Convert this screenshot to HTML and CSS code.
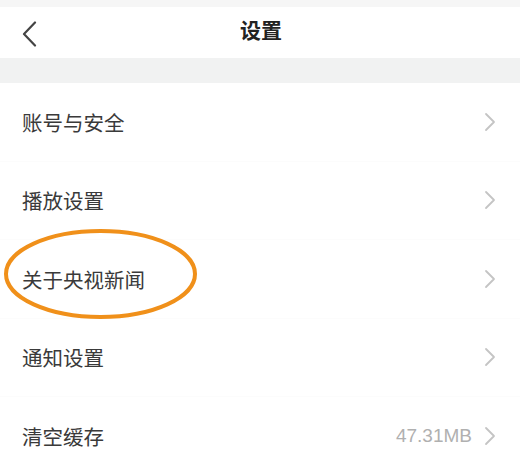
FILE: index.html
```html
<!DOCTYPE html>
<html lang="zh-CN">
<head>
    <meta charset="UTF-8">
    <meta name="viewport" content="width=device-width, initial-scale=1.0">
    <title>设置</title>
    <link rel="stylesheet" href="styles.css">
</head>
<body>
<div class="page">
    <div class="top-strip"></div>
    <div class="nav-bar">
        <span class="nav-back">
            <svg width="16" height="26" viewBox="0 0 16 26"><path d="M14 1.5 L3 13 L14 24.5" fill="none" stroke="#444" stroke-width="2.2" stroke-linecap="round" stroke-linejoin="round"/></svg>
        </span>
        <span class="nav-title">设置</span>
    </div>
    <div class="gap-band"></div>
    <ul class="settings-list">
        <li class="settings-item">
            <span class="item-label">账号与安全</span>
            <span class="item-right"><svg class="chev" width="12" height="20" viewBox="0 0 12 20"><path d="M2 2 L10 10 L2 18" fill="none" stroke="#c4c4c4" stroke-width="1.8" stroke-linecap="round" stroke-linejoin="round"/></svg></span>
        </li>
        <li class="settings-item">
            <span class="item-label">播放设置</span>
            <span class="item-right"><svg class="chev" width="12" height="20" viewBox="0 0 12 20"><path d="M2 2 L10 10 L2 18" fill="none" stroke="#c4c4c4" stroke-width="1.8" stroke-linecap="round" stroke-linejoin="round"/></svg></span>
        </li>
        <li class="settings-item is-marked">
            <span class="item-label">关于央视新闻</span>
            <span class="item-right"><svg class="chev" width="12" height="20" viewBox="0 0 12 20"><path d="M2 2 L10 10 L2 18" fill="none" stroke="#c4c4c4" stroke-width="1.8" stroke-linecap="round" stroke-linejoin="round"/></svg></span>
            <svg class="mark" width="195" height="92" viewBox="0 0 195 92"><ellipse cx="97.5" cy="46" rx="94.5" ry="43" fill="none" stroke="#f0901a" stroke-width="4"/></svg>
        </li>
        <li class="settings-item">
            <span class="item-label">通知设置</span>
            <span class="item-right"><svg class="chev" width="12" height="20" viewBox="0 0 12 20"><path d="M2 2 L10 10 L2 18" fill="none" stroke="#c4c4c4" stroke-width="1.8" stroke-linecap="round" stroke-linejoin="round"/></svg></span>
        </li>
        <li class="settings-item">
            <span class="item-label">清空缓存</span>
            <span class="item-right"><span class="item-value">47.31MB</span><svg class="chev" width="12" height="20" viewBox="0 0 12 20"><path d="M2 2 L10 10 L2 18" fill="none" stroke="#c4c4c4" stroke-width="1.8" stroke-linecap="round" stroke-linejoin="round"/></svg></span>
        </li>
    </ul>
</div>
</body>
</html>
```

FILE: styles.css
```css
html,
body {
    margin: 0;
    padding: 0;
    background-color: #ffffff;
}
.page {
    width: 520px;
    height: 464px;
    overflow: hidden;
    font-family: "Noto Sans CJK SC", "Noto Sans", sans-serif;
    color: #333333;
}
.top-strip {
    height: 7px;
    background-color: #f6f6f6;
}
.nav-bar {
    position: relative;
    display: flex;
    align-items: center;
    justify-content: center;
    height: 51px;
    background-color: #ffffff;
}
.nav-back {
    position: absolute;
    left: 21px;
    top: 14px;
    display: flex;
}
.nav-title {
    font-size: 21px;
    font-weight: bold;
    color: #222222;
    margin-left: 2px;
    margin-top: -8px;
}
.gap-band {
    height: 25px;
    background-color: #f1f2f2;
}
.settings-list {
    list-style: none;
    margin: 0;
    padding: 0;
}
.settings-item {
    position: relative;
    display: flex;
    align-items: center;
    justify-content: space-between;
    box-sizing: border-box;
    height: 78.5px;
    padding: 0 24px 0 22px;
    border-bottom: 1px solid #fcfcfc;
}
.item-label {
    font-size: 20.5px;
    line-height: 1;
    color: #3a3a3a;
}
.item-right {
    display: flex;
    align-items: center;
}
.item-value {
    font-family: "Liberation Sans", Arial, sans-serif;
    font-size: 19px;
    color: #b0b0b0;
    margin-right: 12px;
}
.chev {
    display: block;
}
.mark {
    position: absolute;
    left: 3px;
    top: -12px;
}
```
